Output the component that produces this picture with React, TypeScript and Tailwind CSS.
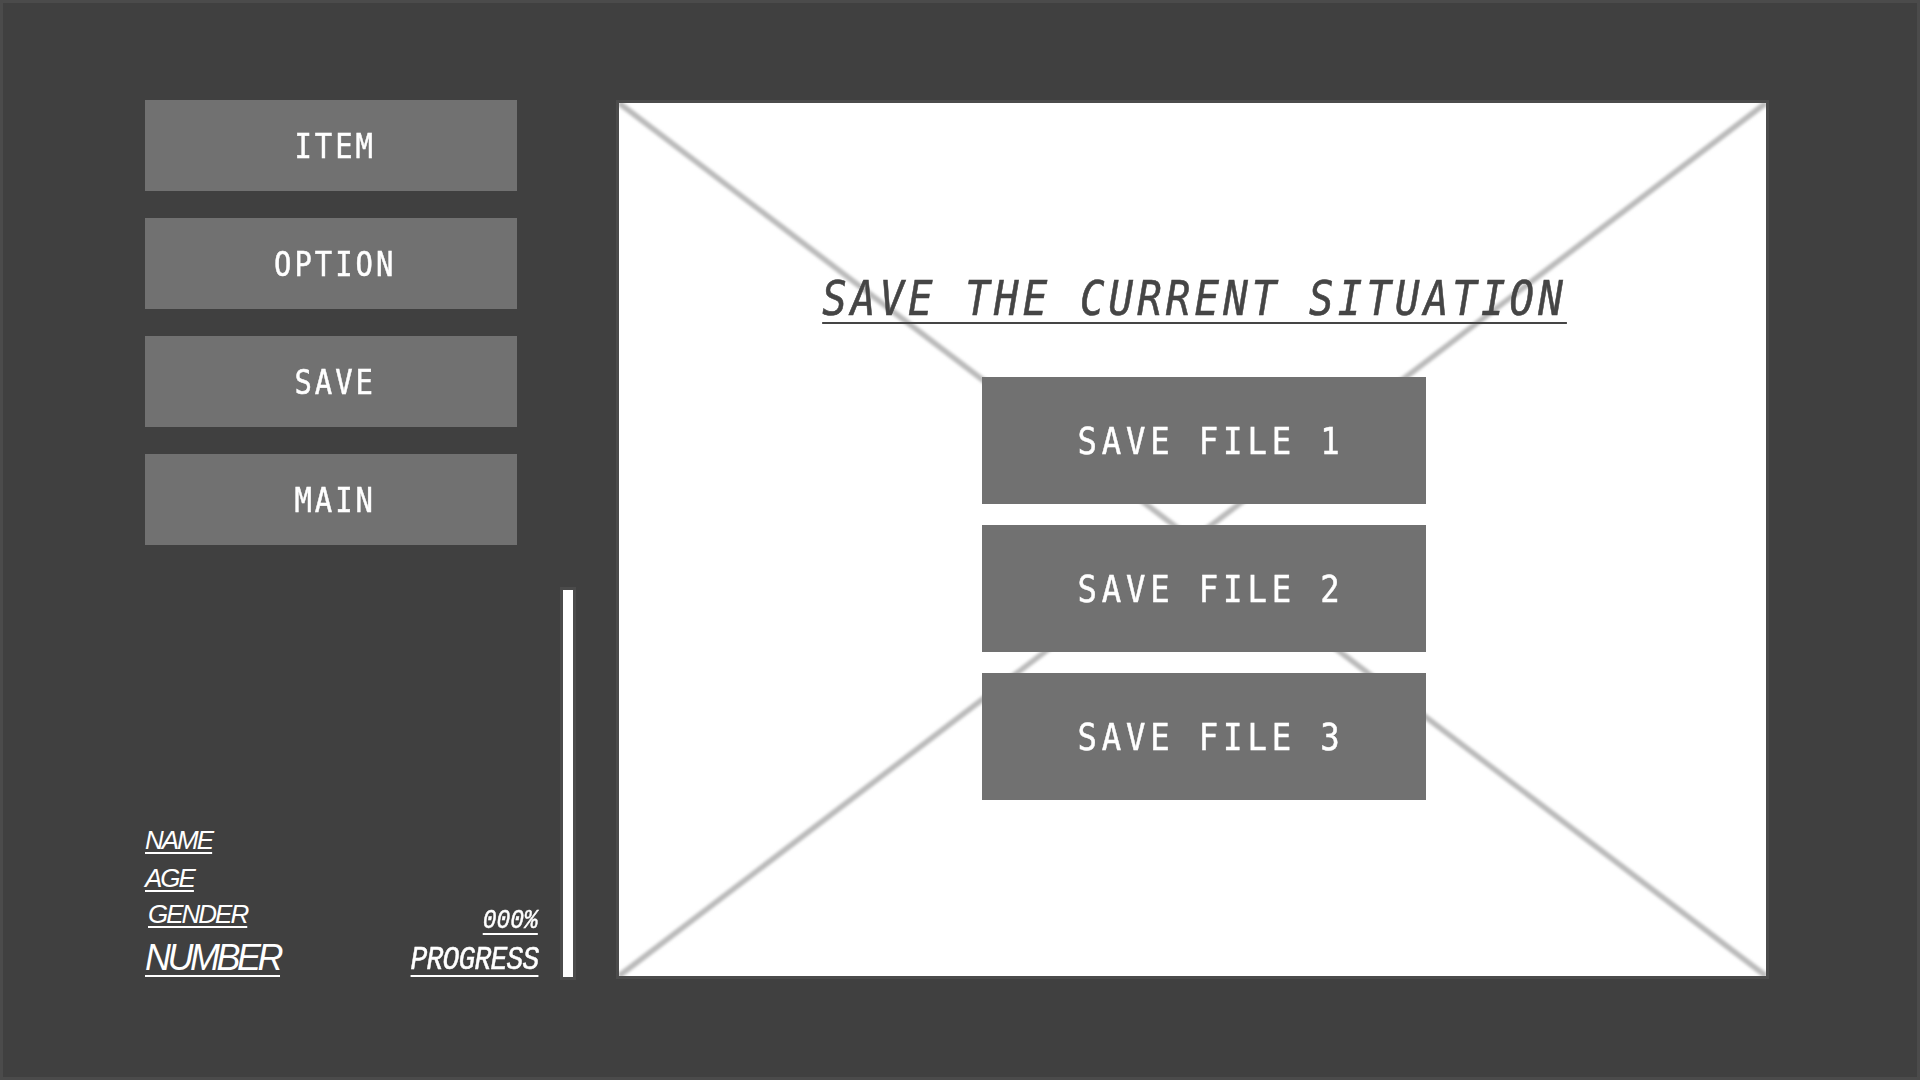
import React from "react";

const MENU = ["ITEM", "OPTION", "SAVE", "MAIN"];
const SLOTS = ["SAVE FILE 1", "SAVE FILE 2", "SAVE FILE 3"];

const mono = "font-['DejaVu_Sans_Mono','Liberation_Mono',monospace]";
const lmono = "font-['Liberation_Mono','DejaVu_Sans_Mono',monospace]";
const sans = "font-['Liberation_Sans',Arial,sans-serif]";

function PlayerInfo() {
  return (
    <div className="mt-auto flex items-end justify-between text-white">
      <div className={`flex flex-col italic ${sans}`}>
        <span className="text-[26px] leading-[38px] tracking-[-2px] underline decoration-[1.5px] underline-offset-[3px]">
          NAME
        </span>
        <span className="text-[26px] leading-[38px] tracking-[-2px] underline decoration-[1.5px] underline-offset-[3px]">
          AGE
        </span>
        <span className="ml-[3px] text-[26px] leading-[34px] tracking-[-2px] underline decoration-[1.5px] underline-offset-[3px]">
          GENDER
        </span>
        <span className="text-[36px] leading-[53px] tracking-[-3.5px] underline decoration-[2px] underline-offset-[5px]">
          NUMBER
        </span>
      </div>
      <div
        className={`flex flex-col items-end italic [-webkit-text-stroke:0.5px_white] ${lmono}`}
      >
        <span className="origin-right scale-x-[0.85] text-[27px] leading-[34px] underline decoration-[1.5px] underline-offset-[5px]">
          000%
        </span>
        <span className="origin-right scale-x-[0.85] text-[33px] leading-[46px] tracking-[-1px] underline decoration-[2px] underline-offset-[6px]">
          PROGRESS
        </span>
      </div>
    </div>
  );
}

export default function App() {
  return (
    <div className="flex h-[1080px] w-[1920px] border-[3px] border-[#4b4b4b] bg-[#404040] pl-[142px] pt-[97px]">
      {/* left column: menu + player info */}
      <div className="flex h-[884px] w-[393px] flex-col">
        <div className="flex w-[372px] flex-col gap-[27px]">
          {MENU.map((label) => (
            <button
              key={label}
              type="button"
              className={`flex h-[91px] w-full items-center justify-center bg-[#717171] text-[34px] leading-none text-white ${mono}`}
            >
              <span className="inline-block scale-x-[0.85] pl-[10px] tracking-[3.5px] [-webkit-text-stroke:0.5px_white]">
                {label}
              </span>
            </button>
          ))}
        </div>
        <PlayerInfo />
      </div>

      {/* progress bar */}
      <div className="ml-[22px] mt-[487px] h-[393px] w-[16px] border-[3px] border-[#4b4b4b] bg-white" />

      {/* save panel */}
      <div className="relative ml-[40px] h-[879px] w-[1153px] border-[3px] border-[#4b4b4b] bg-white">
        <svg
          className="absolute inset-0 h-full w-full"
          viewBox="0 0 1147 873"
          preserveAspectRatio="none"
        >
          <defs>
            <filter id="soft" x="-5%" y="-5%" width="110%" height="110%">
              <feGaussianBlur stdDeviation="1.5" />
            </filter>
          </defs>
          <g stroke="#bababa" strokeWidth="5.5" filter="url(#soft)">
            <line x1="0" y1="0" x2="1147" y2="873" />
            <line x1="1147" y1="0" x2="0" y2="873" />
          </g>
        </svg>

        <div className="relative flex flex-col items-center pt-[171px]">
          <h1
            className={`inline-block scale-x-[0.85] pl-[4.8px] text-[48px] font-normal italic leading-[48px] tracking-[4.8px] text-[#454545] underline decoration-[2.4px] underline-offset-[7px] [-webkit-text-stroke:0.6px_#454545] ${mono}`}
          >
            SAVE THE CURRENT SITUATION
          </h1>
          <div className="ml-[23px] mt-[55px] flex flex-col gap-[21px]">
            {SLOTS.map((slot) => (
              <button
                key={slot}
                type="button"
                className={`flex h-[127px] w-[444px] items-center justify-center bg-[#717171] text-[38px] leading-none text-white ${mono}`}
              >
                <span className="inline-block scale-x-[0.85] pl-[16px] tracking-[5.7px] [-webkit-text-stroke:0.5px_white]">
                  {slot}
                </span>
              </button>
            ))}
          </div>
        </div>
      </div>
    </div>
  );
}
